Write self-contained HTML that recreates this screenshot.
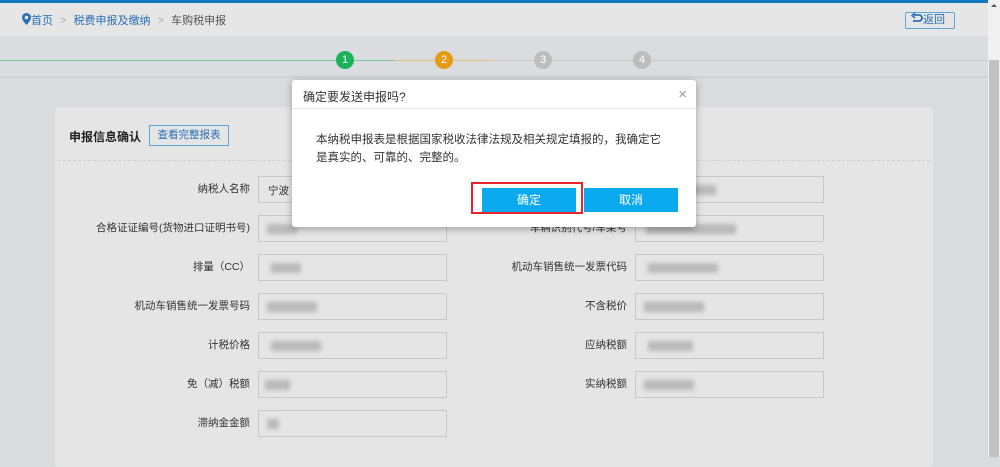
<!DOCTYPE html>
<html><head><meta charset="utf-8"><style>
*{margin:0;padding:0;box-sizing:border-box}
body{width:1000px;height:457px;overflow:hidden;background:#d9dbde;font-family:"Liberation Sans","Noto Sans CJK SC",sans-serif;font-size:12px;color:#333;position:relative}
.abs{position:absolute}
.lbl{position:absolute;text-align:right;font-size:10.5px;color:#333;line-height:27px}
.inp{position:absolute;height:27px;border:1px solid #c8c8c8;background:#e5e5e5}
.blur{position:absolute;height:10px;background:#b9b9b9;filter:blur(2px)}
.c{position:absolute;width:18px;height:18px;border-radius:50%;color:#fff;font-size:11px;line-height:18px;text-align:center}
</style></head><body>
<div class="abs" style="left:0;top:0;width:988px;height:3px;background:#1477c0"></div>
<div class="abs" style="left:0;top:3px;width:988px;height:33px;background:#e6e6e6"></div>
<div class="abs" style="left:22px;top:12px;font-size:11px;color:#2a6fb5">
<svg width="9" height="12" viewBox="0 0 9 12" style="vertical-align:-1px"><path d="M4.5 0C2 0 0 2 0 4.5 0 7.5 4.5 12 4.5 12S9 7.5 9 4.5C9 2 7 0 4.5 0z" fill="#2a6fb5"/><circle cx="4.5" cy="4.5" r="1.8" fill="#e6e6e6"/></svg>首页 <span style="color:#aaa;margin:0 4px">&gt;</span> 税费申报及缴纳 <span style="color:#aaa;margin:0 4px">&gt;</span> <span style="color:#555">车购税申报</span></div>
<div class="abs" style="left:905px;top:12px;width:50px;height:17px;border:1px solid #5aa6d9;border-radius:2px;font-size:11px;color:#2a6fb5;line-height:15px;padding-left:5px">
<svg width="12" height="11" viewBox="0 0 12 11" style="vertical-align:-1px"><path d="M3 2H8a3 3 0 0 1 0 6H2" stroke="#2a6fb5" stroke-width="1.8" fill="none"/><path d="M4 0L1 2.5 4 5" stroke="#2a6fb5" stroke-width="1.5" fill="none"/></svg>返回</div>
<div class="abs" style="left:0;top:36px;width:988px;height:42px;background:#dadcdf;border-bottom:2px solid #cfd1d4"></div>
<div class="abs" style="left:0;top:60px;width:395px;height:1px;background:#7fcaa0"></div>
<div class="abs" style="left:395px;top:60px;width:99px;height:1px;background:#e3c07a"></div>
<div class="abs" style="left:494px;top:60px;width:494px;height:1px;background:#c8c8c8"></div>
<div class="c" style="left:336px;top:51px;background:#1bb35a">1</div>
<div class="c" style="left:435px;top:51px;background:#e79a14">2</div>
<div class="c" style="left:534px;top:51px;background:#bdbdbd">3</div>
<div class="c" style="left:633px;top:51px;background:#bdbdbd">4</div>
<div class="abs" style="left:55px;top:107px;width:878px;height:360px;background:#e5e5e5;border-radius:3px"></div>
<div class="abs" style="left:69px;top:128px;font-size:12px;font-weight:bold;color:#222">申报信息确认</div>
<div class="abs" style="left:149px;top:125px;width:80px;height:21px;border:1px solid #5aa6d9;font-size:10.5px;color:#2a6fb5;line-height:19px;text-align:center">查看完整报表</div>
<div class="abs" style="left:58px;top:160px;width:872px;border-top:1px dashed #cfcfcf"></div>

<div class="lbl" style="left:60px;width:190px;top:176px">纳税人名称</div>
<div class="inp" style="left:258px;top:176px;width:189px"><span style="position:absolute;left:9px;top:6px;font-size:10.5px">宁波</span></div>
<div class="lbl" style="left:60px;width:190px;top:215px">合格证证编号(货物进口证明书号)</div>
<div class="inp" style="left:258px;top:215px;width:189px"><div class="blur" style="left:8px;top:8px;width:30px"></div></div>
<div class="lbl" style="left:60px;width:190px;top:254px">排量（CC）</div>
<div class="inp" style="left:258px;top:254px;width:189px"><div class="blur" style="left:12px;top:8px;width:30px"></div></div>
<div class="lbl" style="left:60px;width:190px;top:293px">机动车销售统一发票号码</div>
<div class="inp" style="left:258px;top:293px;width:189px"><div class="blur" style="left:8px;top:8px;width:50px"></div></div>
<div class="lbl" style="left:60px;width:190px;top:332px">计税价格</div>
<div class="inp" style="left:258px;top:332px;width:189px"><div class="blur" style="left:12px;top:8px;width:50px"></div></div>
<div class="lbl" style="left:60px;width:190px;top:371px">免（减）税额</div>
<div class="inp" style="left:258px;top:371px;width:189px"><div class="blur" style="left:6px;top:8px;width:25px"></div></div>
<div class="lbl" style="left:60px;width:190px;top:410px">滞纳金金额</div>
<div class="inp" style="left:258px;top:410px;width:189px"><div class="blur" style="left:8px;top:8px;width:12px"></div></div>

<div class="inp" style="left:635px;top:176px;width:189px"><div class="blur" style="left:10px;top:8px;width:70px"></div></div>
<div class="lbl" style="left:440px;width:187px;top:215px">车辆识别代号/车架号</div>
<div class="inp" style="left:635px;top:215px;width:189px"><div class="blur" style="left:10px;top:8px;width:90px"></div></div>
<div class="lbl" style="left:440px;width:187px;top:254px">机动车销售统一发票代码</div>
<div class="inp" style="left:635px;top:254px;width:189px"><div class="blur" style="left:12px;top:8px;width:70px"></div></div>
<div class="lbl" style="left:440px;width:187px;top:293px">不含税价</div>
<div class="inp" style="left:635px;top:293px;width:189px"><div class="blur" style="left:8px;top:8px;width:60px"></div></div>
<div class="lbl" style="left:440px;width:187px;top:332px">应纳税额</div>
<div class="inp" style="left:635px;top:332px;width:189px"><div class="blur" style="left:12px;top:8px;width:45px"></div></div>
<div class="lbl" style="left:440px;width:187px;top:371px">实纳税额</div>
<div class="inp" style="left:635px;top:371px;width:189px"><div class="blur" style="left:8px;top:8px;width:50px"></div></div>

<div class="abs" style="left:988px;top:0;width:12px;height:457px;background:#f0f0f0"></div>
<div class="abs" style="left:989px;top:60px;width:10px;height:397px;background:#c1c1c1"></div>
<div class="abs" style="left:991px;top:4px;width:0;height:0;border-left:3px solid transparent;border-right:3px solid transparent;border-bottom:3px solid #555"></div>

<div class="abs" style="left:292px;top:80px;width:404px;height:147px;background:#fff;border-radius:3px;box-shadow:0 2px 8px rgba(0,0,0,.3)">
<div style="height:29px;border-bottom:1px solid #e5e5e5;padding:8px 0 0 11px;font-size:12px;color:#333">确定要发送申报吗?</div>
<div class="abs" style="right:9px;top:6px;font-size:15px;color:#999">×</div>
<div class="abs" style="left:24px;top:51px;width:352px;font-size:11.5px;line-height:18px;color:#333">本纳税申报表是根据国家税收法律法规及相关规定填报的，我确定它是真实的、可靠的、完整的。</div>
<div class="abs" style="left:179px;top:102px;width:112px;height:32px;border:2px solid #e8262a"></div>
<div class="abs" style="left:190px;top:108px;width:94px;height:24px;background:#0baaf0;color:#fff;text-align:center;line-height:24px;font-size:12px">确定</div>
<div class="abs" style="left:292px;top:108px;width:94px;height:24px;background:#0baaf0;color:#fff;text-align:center;line-height:24px;font-size:12px">取消</div>
</div>
</body></html>
